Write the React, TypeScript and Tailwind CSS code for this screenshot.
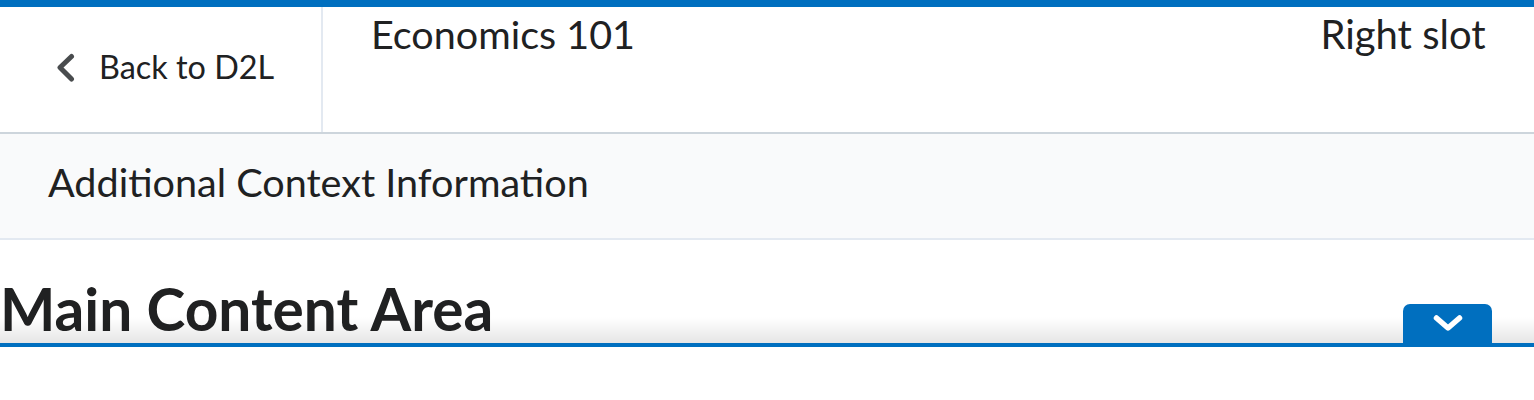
import React from "react";

export default function App() {
  return (
    <div className="w-[1534px] bg-white text-[#202122] font-['Lato','Noto_Sans',sans-serif]">
      <div className="h-[7px] bg-[#006fbf]" />
      <header className="flex h-[127px] border-b-2 border-[#cdd5dc]">
        <div className="flex w-[323px] items-center border-r-2 border-[#e3e9f1] pl-[56px]">
          <svg width="20" height="30" viewBox="0 0 20 30" className="-mt-[4px] shrink-0">
            <path d="M15.5 3.5 L4 14.5 L15.5 26" fill="none" stroke="#494c4e" strokeWidth="5" strokeLinecap="round" strokeLinejoin="round" />
          </svg>
          <span className="-mt-[4px] ml-[23px] text-[32.4px] leading-none">Back to D2L</span>
        </div>
        <div className="flex-1 pl-[48px] pt-[3px]">
          <div className="text-[39.5px] leading-[1.2]">Economics 101</div>
        </div>
        <div className="flex w-[262px] justify-center pt-[3px]">
          <div className="text-[40px] leading-[1.2]">Right slot</div>
        </div>
      </header>
      <div className="flex h-[106px] items-center border-b-2 border-[#e3e9f1] bg-[#f9fafb] pl-[48px]">
        <span className="-mt-[8px] text-[39.6px] leading-none">Additional Context Information</span>
      </div>
      <main className="relative">
        <h1 className="mt-[33px] text-[58.6px] font-bold leading-[1.2]">Main Content Area</h1>
        <div className="relative h-[4px] bg-[#006fbf]">
          <div className="pointer-events-none absolute bottom-full left-0 right-0 h-[26px] bg-linear-to-b from-[rgba(0,0,0,0)] to-[rgba(0,0,0,0.1)]" />
          <button className="absolute bottom-full right-[42px] flex h-[39px] w-[89px] items-center justify-center rounded-t-[7px] bg-[#006fbf]">
            <svg width="32" height="22" viewBox="0 0 32 22">
              <path d="M4.5 5 L16 15 L27.5 5" fill="none" stroke="#fff" strokeWidth="5.5" strokeLinecap="round" strokeLinejoin="round" />
            </svg>
          </button>
        </div>
        <div className="h-[53px]" />
      </main>
    </div>
  );
}
